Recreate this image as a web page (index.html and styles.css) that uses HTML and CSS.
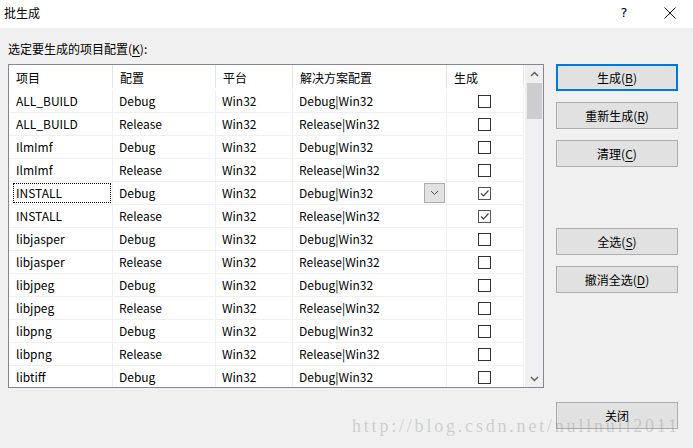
FILE: index.html
```html
<!DOCTYPE html>
<html lang="zh-CN">
<head>
<meta charset="utf-8">
<title>批生成</title>
<link rel="stylesheet" href="styles.css">
</head>
<body>
<div class="dialog">
  <div class="titlebar">
    <span class="title">批生成</span>
    <span class="tb-help">?</span>
    <span class="tb-close"><svg width="12" height="12" viewBox="0 0 12 12"><path d="M0.5 0.5 L11.5 11.5 M11.5 0.5 L0.5 11.5" stroke="#111" stroke-width="1" fill="none"/></svg></span>
  </div>
  <div class="content">
    <div class="label">选定要生成的项目配置(<u>K</u>):</div>
    <div class="main">
      <div class="listview">
        <div class="grid">
          <div class="hdr">
            <div class="hc">项目</div>
            <div class="hc">配置</div>
            <div class="hc">平台</div>
            <div class="hc">解决方案配置</div>
            <div class="hc">生成</div>
          </div>
          <div class="rows">
            <div class="row"><div class="c">ALL_BUILD</div><div class="c">Debug</div><div class="c">Win32</div><div class="c">Debug|Win32</div><div class="c cb"><span class="box"></span></div></div>
            <div class="row"><div class="c">ALL_BUILD</div><div class="c">Release</div><div class="c">Win32</div><div class="c">Release|Win32</div><div class="c cb"><span class="box"></span></div></div>
            <div class="row"><div class="c">IlmImf</div><div class="c">Debug</div><div class="c">Win32</div><div class="c">Debug|Win32</div><div class="c cb"><span class="box"></span></div></div>
            <div class="row"><div class="c">IlmImf</div><div class="c">Release</div><div class="c">Win32</div><div class="c">Release|Win32</div><div class="c cb"><span class="box"></span></div></div>
            <div class="row"><div class="c focus"><span class="focus-rect"></span>INSTALL</div><div class="c">Debug</div><div class="c">Win32</div><div class="c sol">Debug|Win32<span class="dd"><svg width="9" height="6" viewBox="0 0 9 6"><path d="M1 1 L4.5 4.5 L8 1" stroke="#555" stroke-width="1" fill="none"/></svg></span></div><div class="c cb"><span class="box checked"><svg width="11" height="11" viewBox="0 0 11 11"><path d="M2 5.5 L4.5 8 L9.5 2.5" stroke="#444" stroke-width="1.2" fill="none"/></svg></span></div></div>
            <div class="row"><div class="c">INSTALL</div><div class="c">Release</div><div class="c">Win32</div><div class="c">Release|Win32</div><div class="c cb"><span class="box checked"><svg width="11" height="11" viewBox="0 0 11 11"><path d="M2 5.5 L4.5 8 L9.5 2.5" stroke="#444" stroke-width="1.2" fill="none"/></svg></span></div></div>
            <div class="row"><div class="c">libjasper</div><div class="c">Debug</div><div class="c">Win32</div><div class="c">Debug|Win32</div><div class="c cb"><span class="box"></span></div></div>
            <div class="row"><div class="c">libjasper</div><div class="c">Release</div><div class="c">Win32</div><div class="c">Release|Win32</div><div class="c cb"><span class="box"></span></div></div>
            <div class="row"><div class="c">libjpeg</div><div class="c">Debug</div><div class="c">Win32</div><div class="c">Debug|Win32</div><div class="c cb"><span class="box"></span></div></div>
            <div class="row"><div class="c">libjpeg</div><div class="c">Release</div><div class="c">Win32</div><div class="c">Release|Win32</div><div class="c cb"><span class="box"></span></div></div>
            <div class="row"><div class="c">libpng</div><div class="c">Debug</div><div class="c">Win32</div><div class="c">Debug|Win32</div><div class="c cb"><span class="box"></span></div></div>
            <div class="row"><div class="c">libpng</div><div class="c">Release</div><div class="c">Win32</div><div class="c">Release|Win32</div><div class="c cb"><span class="box"></span></div></div>
            <div class="row"><div class="c">libtiff</div><div class="c">Debug</div><div class="c">Win32</div><div class="c">Debug|Win32</div><div class="c cb"><span class="box"></span></div></div>
          </div>
        </div>
        <div class="scrollbar">
          <div class="arrow"><svg width="9" height="6" viewBox="0 0 9 6"><path d="M1 5 L4.5 1.5 L8 5" stroke="#606060" stroke-width="1.5" fill="none"/></svg></div>
          <div class="track"><div class="thumb"></div></div>
          <div class="arrow"><svg width="9" height="6" viewBox="0 0 9 6"><path d="M1 1 L4.5 4.5 L8 1" stroke="#606060" stroke-width="1.5" fill="none"/></svg></div>
        </div>
      </div>
      <div class="buttons">
        <div class="btn default">生成(<u>B</u>)</div>
        <div class="btn">重新生成(<u>R</u>)</div>
        <div class="btn">清理(<u>C</u>)</div>
        <div class="btn g-sel">全选(<u>S</u>)</div>
        <div class="btn">撤消全选(<u>D</u>)</div>
        <div class="btn g-close">关闭</div>
      </div>
    </div>
  </div>
  <div class="watermark">http://blog.csdn.net/nullnull2011</div>
</div>
</body>
</html>
```

FILE: styles.css
```css
html, body {
  margin: 0;
  padding: 0;
}
body {
  width: 693px;
  height: 448px;
  overflow: hidden;
  background: #f0f0f0;
  font-family: "Noto Sans CJK SC", "Noto Sans", sans-serif;
  font-size: 12px;
  color: #000;
}
.dialog {
  position: relative;
  width: 693px;
  height: 448px;
}
.titlebar {
  height: 28px;
  background: #fff;
  display: flex;
  align-items: center;
  padding-left: 4px;
  position: relative;
}
.title {
  flex: 1;
  font-size: 12px;
  line-height: 16px;
  margin-top: -2px;
}
.tb-help {
  width: 46px;
  text-align: center;
  font-family: "DejaVu Sans", sans-serif;
  font-size: 13px;
  margin-top: -4px;
}
.tb-close {
  width: 46px;
  display: flex;
  justify-content: center;
  margin-top: -2px;
}
.content {
  padding: 0 0 0 8px;
}
.label {
  height: 36px;
  line-height: 16px;
  padding-top: 13px;
  box-sizing: border-box;
}
.label u, .btn u {
  text-decoration: underline;
  text-underline-offset: 2px;
}
.main {
  display: flex;
  gap: 12px;
  align-items: flex-start;
}
.listview {
  width: 536px;
  height: 324px;
  box-sizing: border-box;
  border: 1px solid #828790;
  background: #fff;
  display: flex;
  overflow: hidden;
}
.grid {
  width: 515px;
  flex: none;
}
.hdr, .row {
  display: grid;
  grid-template-columns: 104px 103px 77px 154px 77px;
}
.hdr {
  height: 25px;
}
.hc {
  border-right: 1px solid #e5e5e5;
  padding-left: 7px;
  line-height: 25px;
  height: 23px;
  box-sizing: border-box;
}
.row {
  height: 23px;
}
.c {
  position: relative;
  border-right: 1px solid #f0f0f0;
  border-bottom: 1px solid #f0f0f0;
  padding-left: 6px;
  line-height: 22px;
  white-space: nowrap;
  box-sizing: border-box;
  height: 23px;
}
.c:first-child {
  padding-left: 7px;
}
.cb {
  display: flex;
  align-items: center;
  padding-left: 31px;
}
.box {
  width: 13px;
  height: 13px;
  box-sizing: border-box;
  border: 1px solid #333;
  background: #fff;
  display: flex;
  align-items: center;
  justify-content: center;
}
.box.checked {
  border-color: #555;
}
.focus-rect {
  position: absolute;
  left: 4px;
  top: 1px;
  width: 98px;
  height: 20px;
  box-sizing: border-box;
  border: 1px dotted #000;
}
.dd {
  position: absolute;
  right: 1px;
  top: 1px;
  width: 21px;
  height: 20px;
  box-sizing: border-box;
  background: #e1e1e1;
  border: 1px solid #adadad;
  display: flex;
  align-items: center;
  justify-content: center;
}
.scrollbar {
  width: 19px;
  flex: none;
  background: #f0f0f0;
  border-left: 1px solid #fff;
  display: flex;
  flex-direction: column;
}
.arrow {
  height: 17px;
  display: flex;
  align-items: center;
  justify-content: center;
}
.track {
  flex: 1;
  padding: 1px 0 0 2px;
}
.thumb {
  width: 15px;
  height: 36px;
  background: #cdcdcd;
}
.buttons {
  width: 122px;
  display: flex;
  flex-direction: column;
}
.btn {
  height: 27px;
  box-sizing: border-box;
  border: 1px solid #adadad;
  background: #e1e1e1;
  text-align: center;
  line-height: 25px;
  margin-bottom: 11px;
}
.btn.default {
  border: 2px solid #0078d7;
  line-height: 23px;
}
.btn.g-sel {
  margin-top: 50px;
}
.btn.g-close {
  margin-top: 98px;
}
.watermark {
  position: absolute;
  left: 352px;
  top: 416px;
  font-family: "Liberation Serif", serif;
  font-size: 18px;
  letter-spacing: 2.8px;
  color: rgba(140, 140, 140, 0.35);
  white-space: nowrap;
  pointer-events: none;
}
```
